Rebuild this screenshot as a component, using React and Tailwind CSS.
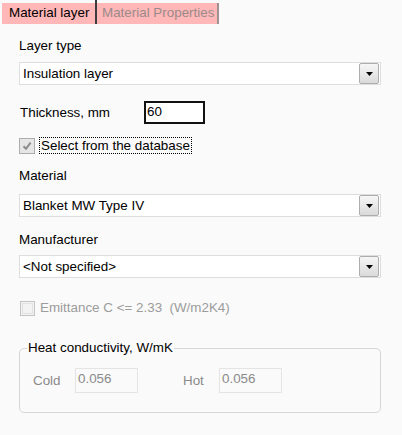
import React from 'react';

const Combo = ({ value }) => (
  <div className="flex items-center h-[23px] bg-white border border-[#dedede] pl-[3px] pr-[1px]">
    <span className="flex-1 text-black leading-[20px]">{value}</span>
    <button className="w-[20px] h-[21px] flex items-center justify-center rounded-[2px] border border-[#adadad] bg-gradient-to-b from-[#f6f6f6] to-[#dadada]">
      <svg width="7" height="4" viewBox="0 0 7 4">
        <path d="M0 0h7L3.5 4z" fill="#000" />
      </svg>
    </button>
  </div>
);

const Label = ({ children, className = '' }) => (
  <div className={`h-[16px] leading-[16px] text-black ${className}`}>{children}</div>
);

const App = () => {
  return (
    <div className="w-[402px] h-[435px] bg-[#fafafa] font-['Liberation_Sans',Arial,sans-serif] text-[13.4px] overflow-hidden">
      {/* Tabs */}
      <div className="flex h-[24px] pl-[2px]">
        <div className="flex items-end border-r-2 border-[#3c3c3c]">
          <div className="h-[21px] w-[93px] bg-[#ffb7b7] pl-[7px] leading-[19px] text-black">Material layer</div>
        </div>
        <div className="flex items-end pt-[2px]">
          <div className="h-[21px] w-[122px] bg-[#ffb7b7] pl-[5px] leading-[19px] text-[#9a8a8a] border-r-2 border-[#a09090]">
            Material Properties
          </div>
        </div>
      </div>

      <div className="px-[19px] w-[400px]">
        <Label className="mt-[14px]">Layer type</Label>
        <div className="mt-[8px]">
          <Combo value="Insulation layer" />
        </div>

        {/* Thickness */}
        <div className="mt-[16px] flex items-center h-[23px]">
          <span className="w-[125px] pl-[1px] text-black pt-[1px]">Thickness, mm</span>
          <div className="w-[61px] h-[23px] border-2 border-[#111] bg-white pl-[1px] leading-[17px] text-black">60</div>
        </div>

        {/* Select from database */}
        <div className="mt-[13px] flex items-center h-[17px]">
          <div className="w-[16px] h-[16px] border border-[#adadad] bg-[#e6e6e6] flex items-center justify-center">
            <svg width="10" height="10" viewBox="0 0 10 10">
              <path d="M1.5 5.2 L4 7.8 L8.6 1.6" stroke="#8c8c8c" strokeWidth="2" fill="none" />
            </svg>
          </div>
          <span className="ml-[4px] h-[17px] leading-[15px] px-[1px] border border-dotted border-black text-black">
            Select from the database
          </span>
        </div>

        <Label className="mt-[14px]">Material</Label>
        <div className="mt-[10px]">
          <Combo value="Blanket MW Type IV" />
        </div>

        <Label className="mt-[15px]">Manufacturer</Label>
        <div className="mt-[7px]">
          <Combo value="<Not specified>" />
        </div>

        {/* Emittance */}
        <div className="mt-[22px] flex items-center h-[16px]">
          <div className="ml-[1px] w-[15px] h-[15px] border border-[#c4c4c4] bg-[#f3f3f3] p-[1px]">
            <div className="w-full h-full border border-[#e2e2e2]" />
          </div>
          <span className="ml-[5px] text-[#9c9c9c] whitespace-pre">Emittance C {'<='} 2.33  (W/m2K4)</span>
        </div>

        {/* Heat conductivity */}
        <fieldset className="mt-[24px] border border-[#d6d6d6] rounded-[5px] pb-[19px]">
          <legend className="ml-[7px] px-[1px] leading-[16px] text-black">Heat conductivity, W/mK</legend>
          <div className="mt-[12px] flex items-center">
            <span className="ml-[13px] w-[42px] text-[#8a8a8a] pt-[1px]">Cold</span>
            <div className="w-[63px] h-[25px] border border-[#e4e4e4] pl-[2px] pt-[2px] leading-[16px] text-[#8a8a8a]">0.056</div>
            <span className="ml-[45px] w-[36px] text-[#8a8a8a] pt-[1px]">Hot</span>
            <div className="w-[63px] h-[25px] border border-[#e4e4e4] pl-[2px] pt-[2px] leading-[16px] text-[#8a8a8a]">0.056</div>
          </div>
        </fieldset>
      </div>
    </div>
  );
};

export default App;
